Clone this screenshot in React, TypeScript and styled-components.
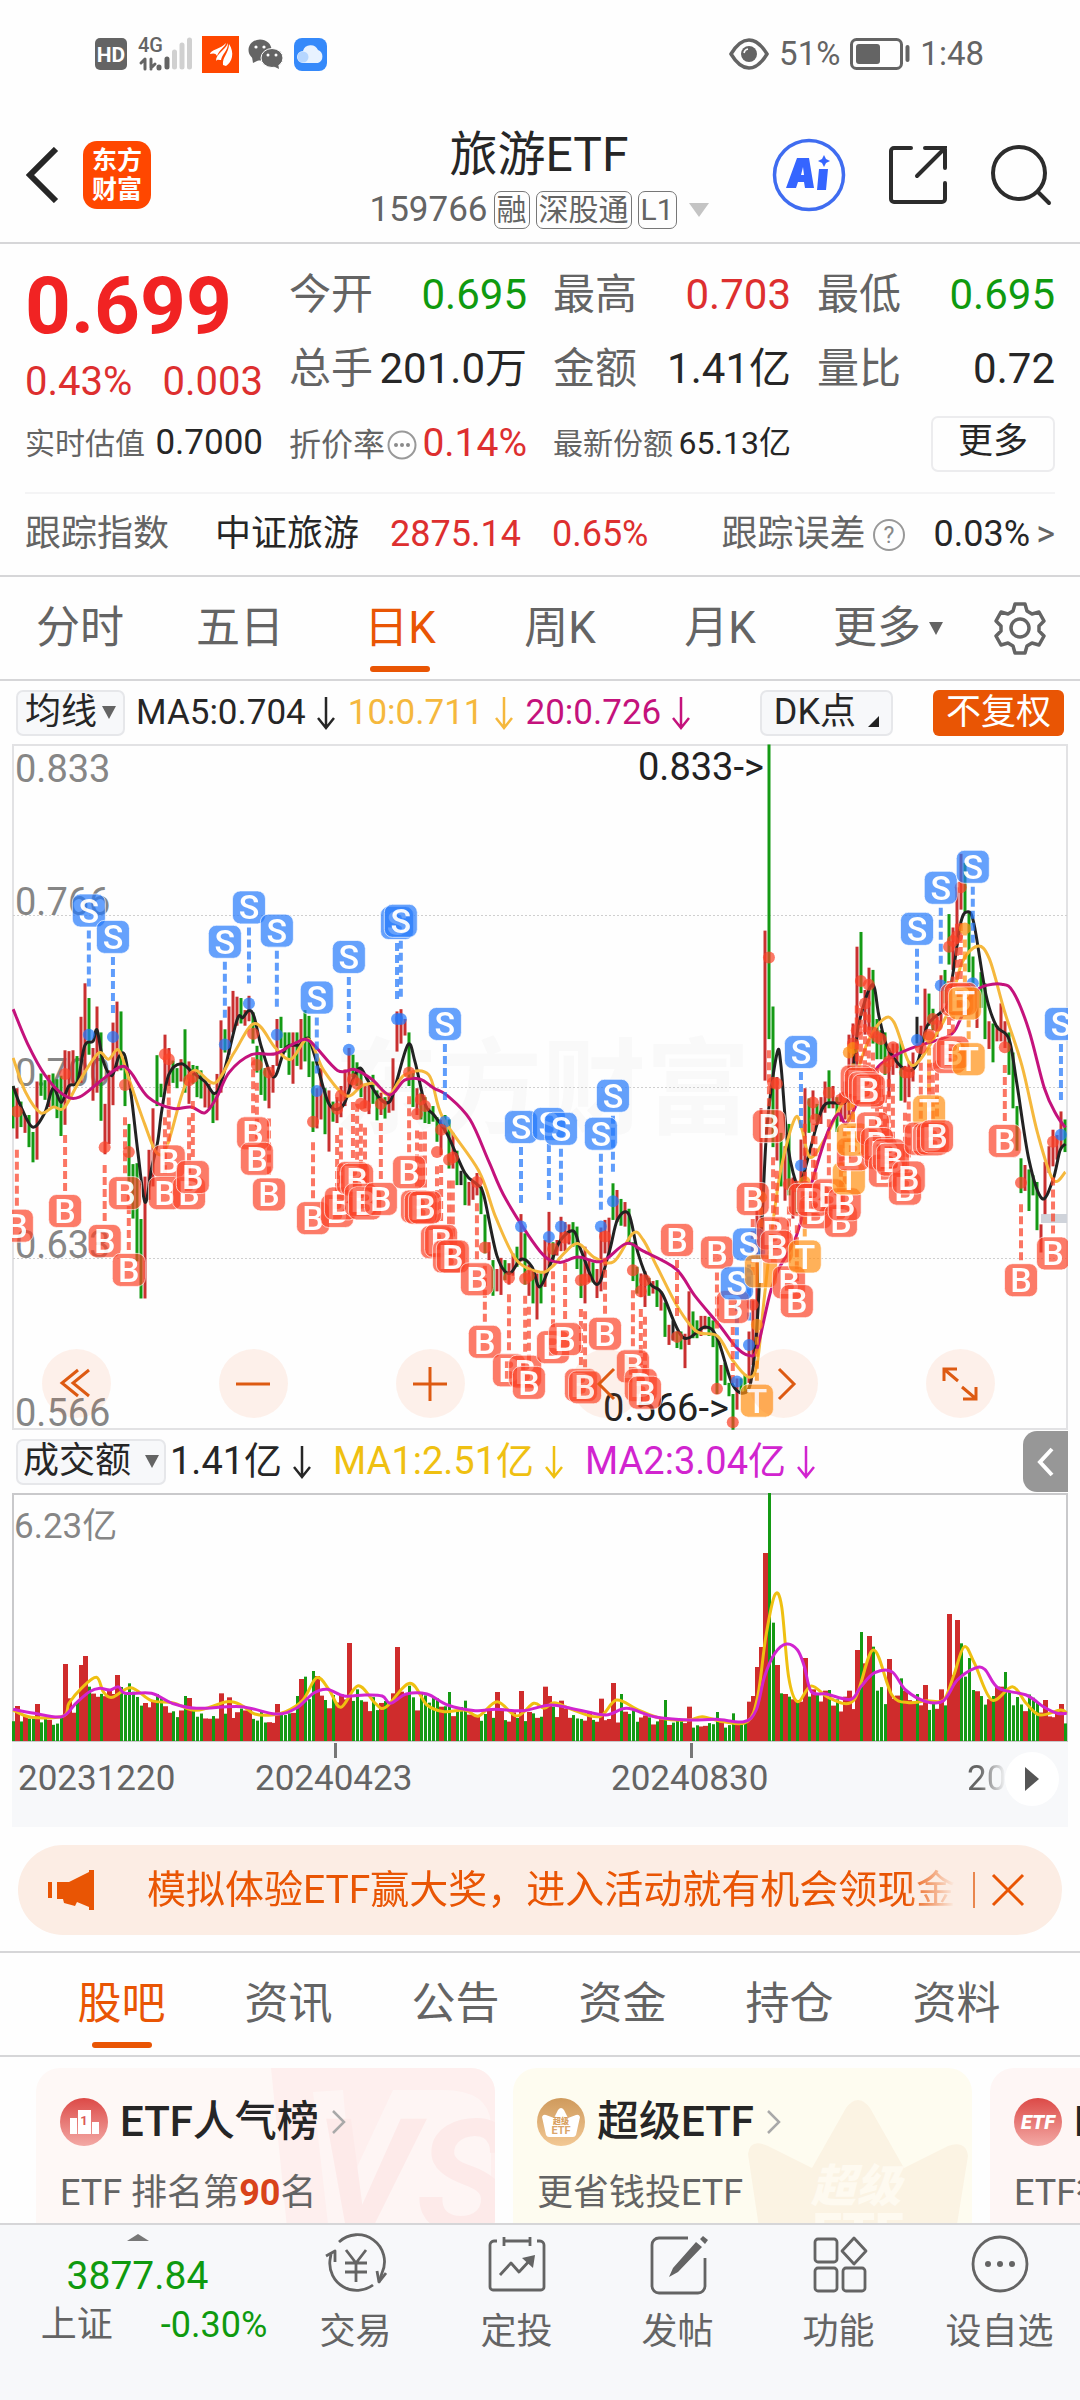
import React from "react";
import styled, { createGlobalStyle } from "styled-components";

const C = {
  orange: "#e95504",
  red: "#dd2f2f",
  green: "#0f9a0f",
  text: "#262626",
  sub: "#646464",
  line: "#d6d6d8",
  soft: "#f7f8fa",
};

const Global = createGlobalStyle`
  * { box-sizing: border-box; }
  body {
    margin: 0;
    background: #fefefe;
    color: ${C.text};
    font-family: Roboto, "Noto Sans CJK SC", sans-serif;
    line-height: 1.2;
  }
  button {
    font: inherit;
    color: inherit;
    padding: 0;
    border: 0;
    background: none;
    cursor: pointer;
  }
  svg { display: block; flex: none; }
  a { color: inherit; text-decoration: none; }
`;

const Page = styled.div`
  display: flex;
  flex-direction: column;
  overflow: hidden;
`;

/* ---------- status bar ---------- */
const StatusBar = styled.div`
  display: flex;
  justify-content: space-between;
  align-items: center;
  height: 108px;
  padding: 0 96px 0 95px;
  color: #646464;
  font-size: 33px;
`;
const StatusGroup = styled.div`
  display: flex;
  align-items: center;
  gap: 10px;
`;

/* ---------- title bar ---------- */
const TitleBar = styled.header`
  display: grid;
  grid-template-columns: 1fr auto 1fr;
  align-items: center;
  height: 136px;
  padding: 0 28px 0 26px;
  border-bottom: 2px solid ${C.line};
`;
const TitleSide = styled.div<{ $end?: boolean; $gap: number }>`
  display: flex;
  align-items: center;
  gap: ${(p) => p.$gap}px;
  justify-content: ${(p) => (p.$end ? "flex-end" : "flex-start")};
`;
const AppLogo = styled.a`
  display: grid;
  place-content: center;
  width: 68px;
  height: 68px;
  border-radius: 14px;
  background: #ff4700;
  color: #fff;
  font-size: 25px;
  font-weight: 700;
  line-height: 29px;
  text-align: center;
`;
const TitleBlock = styled.div`
  display: flex;
  flex-direction: column;
  align-items: center;
  gap: 8px;
  padding-top: 6px;
`;
const Title = styled.h1`
  margin: 0;
  font-size: 48px;
  font-weight: 400;
  line-height: 56px;
`;
const CodeRow = styled.div`
  display: flex;
  align-items: center;
  gap: 6px;
  color: ${C.sub};
  font-size: 35px;
  line-height: 38px;
`;
const Tag = styled.span`
  padding: 0 2px;
  border: 1px solid #777;
  border-radius: 7px;
  font-size: 30px;
  line-height: 36px;
`;
const CodeMenu = styled.button`
  margin-left: 6px;
`;

/* ---------- quote ---------- */
const Quote = styled.section`
  padding: 14px 25px 0;
`;
const QuoteGrid = styled.div`
  display: grid;
  grid-template-columns: repeat(4, 1fr);
  grid-template-rows: 74px 74px 76px;
  column-gap: 26px;
  padding-bottom: 10px;
  border-bottom: 2px solid #f4f4f5;
`;
const PriceBlock = styled.div`
  grid-row: span 2;
  color: ${C.red};
`;
const Price = styled.div`
  font-size: 80px;
  font-weight: 700;
  line-height: 96px;
  color: #f12323;
`;
const Change = styled.div`
  display: flex;
  justify-content: space-between;
  font-size: 40px;
  line-height: 56px;
`;
const Cell = styled.div<{ $size?: number }>`
  display: flex;
  align-items: baseline;
  justify-content: space-between;
  white-space: nowrap;
  font-size: ${(p) => p.$size ?? 42}px;
  line-height: 74px;
`;
const Label = styled.span`
  display: flex;
  align-items: center;
  gap: 2px;
  color: ${C.sub};
`;
const Value = styled.span<{ $tone?: string; $size?: number }>`
  color: ${(p) => p.$tone ?? C.text};
  font-size: ${(p) => (p.$size ? `${p.$size}px` : "inherit")};
`;
const MoreButton = styled.button`
  align-self: center;
  justify-self: end;
  width: 124px;
  height: 56px;
  padding-bottom: 4px;
  border: 2px solid #ececee;
  border-radius: 7px;
  font-size: 35px;
`;
const IndexRow = styled.div`
  display: flex;
  align-items: center;
  height: 81px;
  font-size: 36px;
  white-space: nowrap;
`;
const IndexQuote = styled.a`
  display: flex;
  gap: 31px;
  margin-left: 46px;
`;
const IndexError = styled.a`
  display: flex;
  align-items: center;
  gap: 6px;
  margin-left: auto;
`;
const ErrorValue = styled.span`
  margin-left: 22px;
`;

/* ---------- tabs ---------- */
const PeriodTabs = styled.nav`
  display: grid;
  grid-template-columns: repeat(6, 160fr) 120fr;
  height: 106px;
  border-top: 2px solid ${C.line};
  border-bottom: 2px solid ${C.line};
`;
const SectionTabs = styled.nav`
  display: grid;
  grid-template-columns: repeat(6, 1fr);
  height: 106px;
  margin-top: 16px;
  padding: 0 40px 0 38px;
  border-top: 2px solid ${C.line};
  border-bottom: 2px solid ${C.line};
`;
const Tab = styled.button<{ $on?: boolean; $menu?: boolean }>`
  position: relative;
  display: flex;
  align-items: center;
  justify-content: center;
  gap: 8px;
  padding-left: ${(p) => (p.$menu ? 16 : 0)}px;
  font-size: 44px;
  color: ${(p) => (p.$on ? C.orange : C.sub)};
  &::after {
    content: "";
    display: ${(p) => (p.$on ? "block" : "none")};
    position: absolute;
    left: calc(50% - 30px);
    bottom: 7px;
    width: 60px;
    height: 6px;
    border-radius: 3px;
    background: ${C.orange};
  }
`;

/* ---------- charts ---------- */
const ChartArea = styled.section`
  padding: 0 12px;
`;
const Legend = styled.div<{ $size: number }>`
  position: relative;
  display: flex;
  align-items: center;
  height: 63px;
  padding-left: 4px;
  font-size: ${(p) => p.$size}px;
  white-space: nowrap;
`;
const Chip = styled.button<{ $gap: number; $pad: number }>`
  display: flex;
  align-items: center;
  gap: ${(p) => p.$gap}px;
  height: 46px;
  padding: 0 ${(p) => p.$pad}px;
  border: 2px solid #e6e7ea;
  border-radius: 7px;
  background: ${C.soft};
  font-size: 36px;
`;
const LegendItem = styled.span<{ $tone: string; $left: number }>`
  display: flex;
  align-items: center;
  gap: 10px;
  margin-left: ${(p) => p.$left}px;
  color: ${(p) => p.$tone};
`;
const LegendEnd = styled.div`
  display: flex;
  align-items: center;
  gap: 40px;
  margin: 0 4px 0 auto;
`;
const AdjustButton = styled.button`
  height: 46px;
  padding: 0 13px;
  border-radius: 6px;
  background: ${C.orange};
  color: #fff;
  font-size: 35px;
`;
const FoldButton = styled.button`
  display: grid;
  place-content: center;
  width: 45px;
  height: 61px;
  margin-left: auto;
  border-radius: 14px 0 0 14px;
  background: #979797;
`;
const ChartBox = styled.div`
  position: relative;
`;
const ChartSvg = styled.svg`
  width: 100%;
  height: auto;
`;
const ChartTools = styled.div`
  position: absolute;
  left: 30px;
  right: 73px;
  bottom: 12px;
  display: flex;
  justify-content: space-between;
`;
const ToolButton = styled.button`
  display: grid;
  place-content: center;
  width: 69px;
  height: 69px;
  border-radius: 50%;
  background: rgba(240, 100, 30, 0.09);
`;
const DateAxis = styled.div`
  position: relative;
  display: grid;
  grid-template-columns: 243fr 356fr 356fr 101fr;
  height: 85px;
  padding-top: 18px;
  background: ${C.soft};
  color: ${C.sub};
  font-size: 35px;
  line-height: 38px;
  overflow: hidden;
`;
const DateLabel = styled.span<{ $tick?: boolean; $pad?: boolean; $fade?: boolean }>`
  position: relative;
  justify-self: start;
  padding-left: ${(p) => (p.$pad ? 6 : 0)}px;
  mask-image: ${(p) => (p.$fade ? "linear-gradient(90deg, #000 30%, transparent)" : "none")};
  &::before {
    content: "";
    display: ${(p) => (p.$tick ? "block" : "none")};
    position: absolute;
    left: 50%;
    top: -17px;
    width: 3px;
    height: 15px;
    background: #777;
  }
`;
const NextButton = styled.button`
  position: absolute;
  right: 9px;
  top: 10px;
  display: grid;
  place-content: center;
  width: 54px;
  height: 54px;
  border-radius: 50%;
  background: #fff;
`;

/* ---------- banner ---------- */
const Banner = styled.div`
  display: flex;
  align-items: center;
  height: 90px;
  margin: 18px 18px 0;
  padding: 0 37px 0 30px;
  border-radius: 45px;
  background: #fcede4;
  color: ${C.orange};
`;
const BannerText = styled.a`
  flex: 1;
  min-width: 0;
  margin: 0 18px 0 53px;
  overflow: hidden;
  white-space: nowrap;
  font-size: 39px;
  line-height: 60px;
  mask-image: linear-gradient(90deg, #000 94%, transparent);
`;
const BannerRule = styled.i`
  width: 2px;
  height: 36px;
  margin-right: 16px;
  background: #e9864e;
`;

/* ---------- cards ---------- */
const Cards = styled.section`
  display: flex;
  gap: 18px;
  height: 166px;
  padding: 11px 0 0 36px;
  overflow: hidden;
`;
const Card = styled.a<{ $bg: string }>`
  position: relative;
  flex: none;
  width: 459px;
  height: 200px;
  padding: 26px 24px;
  border-radius: 24px;
  background: ${(p) => p.$bg};
  overflow: hidden;
`;
const CardArt = styled.svg`
  position: absolute;
  right: 0;
  top: 0;
`;
const CardHead = styled.div`
  position: relative;
  display: flex;
  align-items: center;
  gap: 12px;
  height: 56px;
  font-size: 42px;
  font-weight: 500;
  white-space: nowrap;
`;
const CardText = styled.div`
  position: relative;
  margin-top: 19px;
  color: ${C.sub};
  font-size: 36px;
  line-height: 48px;
  white-space: nowrap;
  b { color: #d9431a; }
`;

/* ---------- bottom bar ---------- */
const BottomBar = styled.nav`
  display: grid;
  grid-template-columns: 275fr repeat(5, 161fr);
  height: 177px;
  border-top: 2px solid ${C.line};
  background: ${C.soft};
`;
const IndexBlock = styled.button`
  display: flex;
  flex-direction: column;
  align-items: center;
  padding-top: 9px;
  color: ${C.green};
`;
const IndexPrice = styled.span`
  margin-top: 11px;
  font-size: 39px;
  line-height: 48px;
`;
const IndexMeta = styled.span`
  display: flex;
  gap: 48px;
  margin-left: 33px;
  font-size: 36px;
  line-height: 50px;
  white-space: nowrap;
`;
const NavItem = styled.button`
  display: flex;
  flex-direction: column;
  align-items: center;
  gap: 12px;
  padding-top: 8px;
  color: ${C.sub};
  font-size: 36px;
  line-height: 50px;
  white-space: nowrap;
`;

/* ---------- small drawings ---------- */
const Caret = ({ w = 14, h = 13, color = "#646464", up = false }) => (
  <svg width={w} height={h} viewBox="0 0 10 10" preserveAspectRatio="none">
    <path d={up ? "M0 10L5 0l5 10z" : "M0 0h10L5 10z"} fill={color} />
  </svg>
);
const DownArrow = () => (
  <svg width="20" height="34" viewBox="0 0 20 34" fill="none" stroke="currentColor" strokeWidth="2.5">
    <path d="M10 1v30M2 22l8 10 8-10" />
  </svg>
);

/* ---------- price data: colour, high, low for each trading day ---------- */
const CANDLES = `g775-870 r780-893 g810-867 r840-880 g840-912 g878-946 r765-940 g747-797 g762-806 r750-822 g747-822 g760-847
g752-887 r695-862 r697-800 r695-770 g708-770 r620-768 r545-740 g578-705 r690-808 r597-790 g655-853 r815-928 r740-905 r633-818
r586-742 g608-740 g712-820 g860-990 g950-1072 g948-1168 g1073-1251 r978-1251 r918-1030 r825-1000 g706-820 g770-800 r660-785
r690-775 g718-768 g735-780 r715-765 g648-790 r720-815 g728-770 g730-800 g740-803 r765-823 r770-825 g790-858 r748-852 r628-790
g648-700 r597-705 r562-655 r575-640 g578-635 r605-640 r573-630 g610-680 g685-745 g700-795 g735-808 r740-825 r728-790 r625-730
g620-690 g655-700 g655-750 r655-770 g655-730 r625-738 g605-720 g618-755 g720-878 r780-870 r735-850 g780-883 r785-922 g810-855
r800-858 r775-845 r738-820 r690-790 g705-755 g722-775 g735-800 r770-825 r770-838 g750-815 g785-852 r790-840 g800-848 r790-835
r713-830 r608-698 r603-680 r625-662 g655-775 g745-822 r780-840 g790-850 g800-858 g825-860 g820-855 g845-900 r850-930 g840-880
g850-960 r880-960 g920-997 k965-997 g970-1042 r990-1043 r990-1030 r970-1020 g1000-1062 g1063-1150 r1125-1165 g1165-1245
r1185-1235 r1160-1243 g1165-1210 r1172-1220 r1150-1200 g1135-1180 r1062-1168 g1105-1220 r1175-1245 g1190-1262 r1195-1298
g1190-1262 r1120-1225 r1057-1180 g1125-1170 r1120-1155 r1068-1145 r1080-1145 r1085-1130 g1080-1135 g1090-1185 g1160-1250
r1135-1262 r1165-1215 g1170-1215 r1185-1250 r1092-1235 r1075-1150 r1070-1155 g993-1075 r1008-1080 g1028-1088 r1035-1090
g1050-1130 g1125-1212 g1180-1240 r1195-1248 r1190-1270 g1205-1245 r1212-1240 g1210-1270 r1235-1278 g1260-1337 r1310-1355
k1300-1345 g1325-1362 g1325-1365 r1330-1407 r1235-1355 g1280-1340 g1300-1340 r1290-1335 r1290-1320 g1292-1335 g1300-1360
g1340-1465 r1400-1435 g1395-1445 g1440-1470 g1465-1545 r1430-1500 g1430-1460 g1420-1465 r1325-1440 r1255-1400 r1055-1340
r825-1130 r427-763 g10-670 g597-912 r755-942 g880-1000 r910-1032 g860-1020 r980-1072 g1000-1060 r895-1010 r780-1000 g803-880
r785-850 g815-855 r800-860 r765-835 g740-825 r775-825 g800-878 r790-855 r765-850 r660-840 r635-760 r463-730 g430-567 r560-660
r510-650 g515-680 g625-715 g650-715 g655-750 r690-800 r680-750 r680-735 g675-808 r730-812 r720-800 r700-765 k620-680 r640-705
r557-660 g568-640 g602-650 r620-665 r527-640 g515-590 g390-503 r420-515 r330-460 r255-380 g275-385 g385-520 g485-545 r560-645
g520-600 g545-670 r630-692 g635-722 r640-675 r590-675 r630-690 g655-750 g700-825 g820-920 g937-1015 r952-1010 g962-1055
g975-1020 g990-1098 r1085-1148 r945-1062 r910-970 r873-955 r885-940 r832-915 g850-923`
  .split(/\s+/)
  .map((s) => {
    const [hi, lo] = s.slice(1).split("-").map(Number);
    return { c: s[0], hi, lo };
  });

type Pt = [number, number];
const pts = (s: string): Pt[] => s.trim().split(/\s+/).map((p) => p.split(",").map(Number) as Pt);

/* Half the price panel is 1568 units wide; its depth of 1568 units spans 700 px. */
const px = (x: number) => x / 2.904 - 12;
const py = (y: number) => y / 2.24 - 4;
const MA5 = pts(`38,775 60,820 95,867 130,835 154,780 178,812 200,775 225,765 246,685 270,675 282,650 300,720 325,752 345,710 363,708
380,790 400,920 421,1035 440,960 458,900 470,830 490,750 526,725 560,745 595,765 623,792 645,760 688,628 705,622 723,606 738,620
760,690 795,755 830,690 870,683 895,668 915,710 955,815 995,820 1025,760 1046,735 1070,765 1105,805 1132,810 1150,770 1185,682
1205,720 1234,815 1260,840 1300,885 1350,970 1385,995 1405,1020 1443,1155 1478,1195 1513,1163 1545,1180 1568,1225 1603,1165
1628,1120 1666,1100 1688,1145 1733,1220 1768,1150 1793,1075 1826,1062 1853,1150 1888,1218 1923,1240 1983,1338 2048,1315
2083,1340 2128,1445 2168,1460 2186,1410 2201,1280 2213,1080 2228,860 2256,703 2268,730 2288,910 2318,1000 2338,960 2373,860
2398,815 2453,812 2473,770 2493,640 2533,548 2553,620 2578,690 2628,738 2663,725 2693,640 2733,610 2753,590 2768,520 2790,410
2808,385 2828,410 2863,570 2893,640 2930,670 2953,770 2988,940 3026,1027 3058,985 3078,920 3094,905`);
const MA10 = pts(`38,712 75,790 118,835 155,822 185,825 230,765 285,702 315,715 345,695 375,760 420,860 455,925 485,910 530,790 565,740
625,768 680,700 740,635 800,690 845,715 895,670 940,740 1005,797 1050,775 1090,770 1130,795 1175,750 1245,750 1285,845 1390,965
1440,1070 1500,1165 1568,1192 1603,1180 1638,1150 1678,1128 1728,1160 1783,1168 1838,1105 1868,1120 1908,1180 1968,1270 2023,1325
2083,1335 2128,1390 2173,1427 2198,1400 2218,1260 2240,1110 2268,960 2308,848 2328,870 2353,935 2398,890 2438,825 2473,780
2518,680 2563,627 2596,632 2638,720 2668,720 2718,660 2758,600 2793,500 2838,462 2873,490 2918,610 2968,730 3013,880 3058,985
3094,968`);
const MA20 = pts(`38,603 80,680 130,750 185,795 230,800 290,765 350,732 380,745 430,800 500,825 555,822 595,835 630,800 665,745 730,705
800,703 860,678 900,675 980,740 1030,738 1080,760 1132,795 1175,762 1220,760 1260,780 1300,797 1365,850 1420,945 1470,1030 1568,1145
1623,1170 1678,1158 1748,1168 1818,1128 1868,1145 1963,1185 2018,1245 2088,1310 2138,1360 2173,1378 2198,1365 2233,1250 2258,1190
2308,1120 2343,1030 2398,890 2434,838 2458,858 2498,800 2550,732 2604,705 2663,686 2758,662 2788,627 2820,575 2855,552 2909,547
2943,565 2988,650 3033,780 3068,840 3094,868`);

const smooth = (list: Pt[], fx: (n: number) => number, fy: (n: number) => number) => {
  const p = list.map(([x, y]) => [fx(x), fy(y)]);
  let d = `M${p[0][0].toFixed(1)} ${p[0][1].toFixed(1)}`;
  for (let i = 0; i < p.length - 1; i++) {
    const a = p[Math.max(0, i - 1)], b = p[i], c = p[i + 1], e = p[Math.min(p.length - 1, i + 2)];
    const q = [b[0] + (c[0] - a[0]) / 6, b[1] + (c[1] - a[1]) / 6, c[0] - (e[0] - b[0]) / 6, c[1] - (e[1] - b[1]) / 6, c[0], c[1]];
    d += "C" + q.map((n) => n.toFixed(1)).join(" ");
  }
  return d;
};

/* Trade marks: kind, x, badge depth, price dot depth. */
const MARKS = `S258,382,660 S328,441,665 S653,452,682 S723,375,590 S804,427,660 S920,577,786 S1013,486,694 S1153,410,625 S1164,405,625
S1292,636,855 S1513,867,1090 S1594,860,1113 S1629,871,1090 S1745,882,1090 S1780,797,1033
B49,1088,832 B189,1055,748 B304,1122,912 B363,1015,773 B374,1187,923 B490,944,715 B479,1015,704 B549,1015,762 B560,979,755
B735,881,658 B746,938,728 B781,1018,745 B909,1071,855 B979,1055,826 B990,1038,797 B1025,981,760 B1037,985,770 B1048,1030,815
B1060,1038,820 B1106,1028,815 B1188,968,745 B1211,1045,838 B1222,1048,805 B1234,1047,820 B1269,1125,923 B1281,1122,873
B1304,1157,940 B1315,1157,935 B1385,1208,990 B1408,1348,1137 B1478,1412,1205 B1525,1415,1207 B1536,1440,1200 B1606,1360,1140
B1641,1342,1115 B1687,1445,1210 B1699,1450,1208 B1757,1330,1112 B1838,1403,1188 B1861,1445,1235 B1873,1462,1210 B1966,1120,1337
B2082,1148,1453 B2128,1270,1528 S2175,1130,1355 S2140,1217,1437 B2186,1028,1265 T2198,1480,1310 T2210,1190,1024 B2233,865,487
B2245,1105,768 B2256,1135,770 B2291,1215,995 B2314,1257,1000 T2337,1157,990 S2326,699,953 B2337,1030,1000 B2368,1058,850
B2361,1030,812 B2407,1020,790 B2442,1077,805 B2453,1040,800 T2465,982,700 B2477,928,680 T2477,895,690 B2488,765,650 B2500,770,540
B2512,780,590 B2523,785,548 B2535,870,655 B2547,905,665 B2558,925,670 B2570,965,735 B2581,930,720 B2593,940,688 B2628,1005,745
B2639,980,745 T2698,832,665 B2674,893,690 B2698,895,660 B2709,893,625 B2721,888,640 B2756,710,463 B2767,700,450 T2813,715,560
B2779,582,440 B2790,580,330 T2802,590,422 S2663,423,672 S2732,331,550 S2825,284,545 B2918,898,688 B2965,1210,992 B3058,1150,900
S3081,636,884`
  .split(/\s+/)
  .map((s) => {
    const [x, y, dot] = s.slice(1).split(",").map(Number);
    return { k: s[0], x: px(x), y: py(y), dot: py(dot) };
  });
const MARK_FILL: Record<string, string> = { S: "#2479fb", B: "#fb4329", T: "#ff9013" };
const BAR: Record<string, string> = { r: "#c93030", g: "#149a14", k: "#222" };

const PriceChart = () => (
  <ChartSvg viewBox="0 0 1056 686" role="img" aria-label="日K">
    <defs>
      <clipPath id="panel"><rect width="1056" height="686" /></clipPath>
    </defs>
    <text x="322" y="382" fontSize="104" fontWeight="700" fill="#f9f9f9">东方财富</text>
    <rect x="1" y="1" width="1054" height="684" fill="none" stroke="#e2e2e4" strokeWidth="2" />
    {[171, 343, 514].map((y) => (
      <path key={y} d={`M1 ${y}.5h1054`} stroke="#cfcfcf" strokeDasharray="2 2" />
    ))}
    <g fontSize="38" fill="#868686">
      <text x="3" y="38">0.833</text>
      <text x="3" y="171">0.766</text>
      <text x="3" y="342">0.700</text>
      <text x="3" y="514">0.633</text>
      <text x="3" y="682">0.566</text>
    </g>
    <g fontSize="38" fill="#222">
      <text x="626" y="36">0.833-&gt;</text>
      <text x="591" y="677">0.566-&gt;</text>
    </g>
    <g clipPath="url(#panel)">
      <rect x="1029" y="470" width="26" height="9" fill="#cfd3da" />
      {CANDLES.map((b, i) => (
        <rect key={i} x={i * 4 - 0.5} y={py(b.hi)} width="3" height={(b.lo - b.hi) / 2.24} fill={BAR[b.c]} />
      ))}
      <g fill="none" strokeWidth="3">
        <path d={smooth(MA5, px, py)} stroke="#222" />
        <path d={smooth(MA10, px, py)} stroke="#f5b83d" />
        <path d={smooth(MA20, px, py)} stroke="#c4127c" />
      </g>
      {MARKS.map((m, i) => {
        const dir = m.dot > m.y ? 1 : -1;
        return (
          <g key={i} fill={MARK_FILL[m.k]} stroke={MARK_FILL[m.k]} opacity="0.72">
            <circle cx={m.x} cy={m.dot} r="6" stroke="none" />
            <path d={`M${m.x} ${m.y + dir * 76}V${m.y + dir * 19}`} strokeWidth="4" strokeDasharray="8 4" />
          </g>
        );
      })}
      {MARKS.map((m, i) => (
        <g key={i} opacity="0.92">
          <rect x={m.x - 16.5} y={m.y - 16.5} width="33" height="33" rx="8" fill={MARK_FILL[m.k]} fillOpacity="0.76" stroke="#fff" strokeOpacity="0.7" />
          <text x={m.x} y={m.y + 12} fontSize="34" fontWeight="500" fill="#fff" textAnchor="middle">{m.k}</text>
        </g>
      ))}
    </g>
  </ChartSvg>
);

/* ---------- turnover ---------- */
const vx = (x: number) => x / 1.452 - 12;
const vy = (y: number) => (y - 219) / 3;
const VMA1 = pts(`19,870 45,892 92,888 100,850 118,805 140,772 150,815 163,832 190,803 220,842 250,848 280,870 300,865 330,845 350,855
370,882 395,885 415,875 440,840 460,773 478,810 495,862 520,797 545,850 560,862 595,790 620,855 645,875 675,870 695,888 722,845
750,888 775,850 790,865 805,848 830,868 870,890 895,840 925,868 960,895 1000,900 1020,890 1050,905 1085,905 1100,830 1112,650
1125,525 1135,560 1145,770 1158,845 1178,798 1205,835 1240,840 1268,690 1295,825 1320,848 1345,842 1370,840 1385,765 1400,680
1415,730 1440,840 1470,800 1490,850 1510,885 1540,870 1549,880`);
const VMA2 = pts(`19,868 50,880 90,890 110,850 130,815 145,805 160,810 172,800 182,820 220,820 250,850 285,865 350,860 400,882 430,865
455,820 475,808 500,828 530,825 555,828 567,850 590,822 620,822 650,855 690,872 720,868 760,872 800,855 840,870 880,885 910,865
950,890 1000,900 1040,898 1080,905 1098,870 1110,770 1125,700 1142,672 1158,690 1168,740 1178,815 1200,822 1235,838 1250,800
1270,758 1295,755 1315,810 1345,845 1370,842 1390,780 1415,745 1430,748 1450,805 1490,825 1515,860 1535,880 1549,880`);
const PEAKS: Record<number, number> = {
  1: 858, 6: 852, 13: 732, 14: 835, 17: 735, 18: 708, 19: 800, 26: 765, 29: 790, 36: 822, 43: 828, 44: 834, 52: 820, 54: 832, 66: 852,
  71: 828, 72: 777, 73: 770, 75: 753, 76: 768, 78: 840, 84: 669, 86: 808, 95: 820, 96: 681, 97: 815, 99: 797, 106: 835, 109: 816,
  113: 842, 121: 816, 127: 813, 133: 800, 134: 828, 137: 842, 147: 836, 150: 789, 152: 822, 163: 840, 169: 860, 176: 876, 180: 880,
  184: 845, 185: 828, 186: 741, 187: 681, 188: 399, 189: 219, 190: 608, 191: 735, 192: 820, 193: 822, 194: 830, 195: 838, 196: 840,
  197: 845, 198: 714, 200: 808, 203: 812, 204: 810, 209: 812, 211: 690, 212: 636, 213: 730, 214: 648, 215: 680, 216: 812, 219: 717,
  222: 775, 223: 812, 226: 822, 228: 795, 232: 808, 234: 582, 235: 765, 236: 600, 237: 670, 238: 770, 239: 714, 240: 810, 245: 828,
  246: 800, 247: 800, 248: 756, 249: 812, 258: 840, 262: 852,
};
/* Days whose turnover bar is coloured against the previous close, not the open. */
const RISING = new Set([127, 133, 150, 219, 228, 234]);
const FALLING = new Set([75, 109, 190, 215, 237, 248]);
const levelAt = (x: number) => {
  const k = Math.max(1, VMA2.findIndex((p) => p[0] >= x));
  const [a, b] = [VMA2[k - 1], VMA2[k]];
  return a[1] + ((b[1] - a[1]) * (x - a[0])) / (b[0] - a[0]);
};
const VOLUMES = CANDLES.map((b, i) => {
  const wave = Math.abs(Math.sin(i * 12.9898) * 43758.5453) % 1;
  const level = Math.max(800, levelAt(19 + i * 5.8));
  return {
    up: RISING.has(i) || (b.c === "r" && !FALLING.has(i)),
    top: PEAKS[i] ?? 962 - (962 - level) * (0.62 + wave * 0.42),
  };
});

const VolumeChart = () => (
  <ChartSvg viewBox="0 0 1056 249" role="img" aria-label="成交额">
    <rect x="1" y="1" width="1054" height="247" fill="none" stroke="#c9c9cb" strokeWidth="2" />
    <text x="2" y="45" fontSize="35" fill="#868686">6.23亿</text>
    {VOLUMES.map((v, i) => (
      <rect key={i} x={i * 4 - (v.up ? 1 : 0)} y={vy(v.top)} width={v.up ? 5 : 3} height={248 - vy(v.top)} fill={v.up ? "#cf2c2c" : BAR.g} />
    ))}
    <g fill="none" strokeWidth="3">
      <path d={smooth(VMA1, vx, vy)} stroke="#efc011" />
      <path d={smooth(VMA2, vx, vy)} stroke="#d124cf" />
    </g>
  </ChartSvg>
);

const TOOLS: [string, string][] = [
  ["快退", "M22 3L6 16l16 13M33 3L17 16l16 13"],
  ["缩小", "M4 17h34"],
  ["放大", "M4 17h34M21 0v34"],
  ["向左", "M28 2L13 17l15 15"],
  ["向右", "M16 2l15 15-15 15"],
  ["全屏", "M5 14V2h13M6 3l13 11M37 20v12H24M36 31L23 20"],
];

const NAV: [string, React.ReactNode][] = [
  ["交易", <>
    <path d="M14 9A27 27 0 0 1 57 40l-3 9M48 52A27 27 0 0 1 5 27l1-6" />
    <path d="M1 23l9-5v11M61 40l-7 9-2-11" />
    <path d="M21 17l10 13 10-13M20 30h22M20 39h22M31 30v19" />
  </>],
  ["定投", <>
    <path d="M11 8H8a4 4 0 0 0-4 4v42a3 3 0 0 0 3 3h48a3 3 0 0 0 3-3V12a4 4 0 0 0-4-4h-3M18 4v9M44 4v9M18 8h26" />
    <path d="M14 42l11-12 8 9 13-14" />
    <path d="M36 25l13-3-2 13z" fill="currentColor" stroke="none" />
  </>],
  ["发帖", <>
    <path d="M41 5H12a7 7 0 0 0-7 7v41a7 7 0 0 0 7 7h39a7 7 0 0 0 7-7V25" />
    <path d="M49 9l6 5-24 25-9 5 4-9zM53 6l3-3 5 4-3 4z" fill="currentColor" stroke="none" />
  </>],
  ["功能", <>
    <rect x="7" y="6" width="22" height="23" rx="3" />
    <path d="M46 5l12 13-12 13-12-13z" />
    <rect x="7" y="35" width="22" height="23" rx="3" />
    <rect x="35" y="35" width="22" height="23" rx="3" />
  </>],
  ["设自选", <>
    <circle cx="31" cy="31" r="27" />
    <g fill="currentColor" stroke="none"><circle cx="19" cy="31" r="3" /><circle cx="31" cy="31" r="3" /><circle cx="43" cy="31" r="3" /></g>
  </>],
];

const Chevron = () => (
  <svg width="16" height="26" viewBox="0 0 16 26" fill="none" stroke="#a9a9a9" strokeWidth="2.5"><path d="M2 2l11 11L2 24" /></svg>
);

export default function App() {
  return (
    <Page>
      <Global />
      <StatusBar>
        <StatusGroup>
          <svg width="232" height="38" viewBox="0 0 232 38">
            <rect x="0" y="3" width="32" height="32" rx="5" fill="#646464" />
            <text x="16" y="27" fontSize="21" fontWeight="700" fill="#fff" textAnchor="middle">HD</text>
            <text x="43" y="17" fontSize="20" fontWeight="500" fill="#646464">4G</text>
            <g stroke="#646464" strokeLinecap="round">
              <path d="M64 32v1M72 24v8" strokeWidth="5" />
              <path d="M50 24v10M56 24v10M50 24l-4 4M56 33l4-4" strokeWidth="3" />
            </g>
            <path d="M79.500 17v15M87 10v22M94.500 5v27" stroke="#d0d0d0" strokeWidth="5" strokeLinecap="round" />
            <rect x="107" y="1" width="37" height="37" fill="#ff4700" />
            <path d="M115 19c0-4 11-5 16-11-1 4-7 7-9 13-1-3-4-3-7-2zM121 26c0-8 9-10 12-18 0 8-6 11-7 17-1 0-4-1-5 1zM128 30c-1-8 6-12 6-21 6 9 3 18-3 22z" fill="#fff" />
            <g fill="#646464">
              <ellipse cx="165" cy="15" rx="11.500" ry="10.500" />
              <path d="M157 22l1 6 6-3z" />
              <ellipse cx="177" cy="23" rx="11" ry="9.500" stroke="#fff" />
              <path d="M178 31l6 3-1-6z" />
            </g>
            <g fill="#fff"><circle cx="161" cy="12" r="1.600" /><circle cx="169" cy="12" r="1.600" /><circle cx="173" cy="20" r="1.500" /><circle cx="181" cy="20" r="1.500" /></g>
            <rect x="199" y="3" width="33" height="33" rx="8" fill="#3589fa" />
            <path d="M208 28a6 6 0 0 1 0-12 8 8 0 0 1 15-1 7 7 0 0 1 0 13z" fill="#e8f2ff" />
            <circle cx="208" cy="22" r="5.500" fill="#b6d6ff" />
          </svg>
        </StatusGroup>
        <StatusGroup>
          <svg width="40" height="32" viewBox="0 0 40 32">
            <path d="M2 16c6-10 12-14 18-14s12 4 18 14c-6 10-12 14-18 14S8 26 2 16z" fill="none" stroke="#646464" strokeWidth="3.500" />
            <circle cx="20" cy="16" r="8" fill="#646464" />
            <path d="M15 15a5 5 0 0 1 4-4" stroke="#fff" strokeWidth="1.500" fill="none" />
          </svg>
          <span>51%</span>
          <svg width="60" height="32" viewBox="0 0 60 32">
            <rect x="1.500" y="1.500" width="50" height="29" rx="5" fill="none" stroke="#646464" strokeWidth="3" />
            <rect x="6" y="6" width="24" height="20" rx="3" fill="#646464" />
            <path d="M57.500 9v13" stroke="#646464" strokeWidth="4" strokeLinecap="round" />
          </svg>
          <span>1:48</span>
        </StatusGroup>
      </StatusBar>

      <TitleBar>
        <TitleSide $gap={24}>
          <button aria-label="返回">
            <svg width="33" height="56" viewBox="0 0 33 56" fill="none" stroke="#262626" strokeWidth="6"><path d="M30 2L4 28l26 26" /></svg>
          </button>
          <AppLogo href="#home">东方<br />财富</AppLogo>
        </TitleSide>
        <TitleBlock>
          <Title>旅游ETF</Title>
          <CodeRow>
            159766<Tag>融</Tag><Tag>深股通</Tag><Tag>L1</Tag>
            <CodeMenu aria-label="切换"><Caret w={20} h={14} color="#c4c4c4" /></CodeMenu>
          </CodeRow>
        </TitleBlock>
        <TitleSide $end $gap={42}>
          <button aria-label="AI">
            <svg width="74" height="74" viewBox="0 0 74 74">
              <circle cx="37" cy="37" r="34.500" fill="none" stroke="#3f6cf0" strokeWidth="3.500" />
              <path d="M14 50L25 20h12l5 30h-9l-1-6h-6l-2 6zM29 37h3l-1-8zM47 31h9l-2 21h-9z" fill="#3565ff" fillRule="evenodd" />
              <path d="M52 17l2 4 4 2-4 2-2 4-2-4-4-2 4-2z" fill="#3565ff" />
            </svg>
          </button>
          <button aria-label="分享">
            <svg width="60" height="60" viewBox="0 0 60 60" fill="none" stroke="#2c2c2c" strokeWidth="4" strokeLinecap="round">
              <path d="M23 3H6a3 3 0 0 0-3 3v48a3 3 0 0 0 3 3h48a3 3 0 0 0 3-3V38M37 3h20v20M57 3L29 31" />
            </svg>
          </button>
          <button aria-label="搜索">
            <svg width="62" height="62" viewBox="0 0 62 62" fill="none" stroke="#2c2c2c" strokeWidth="4" strokeLinecap="round">
              <circle cx="29" cy="29" r="26" /><path d="M48 48l11 11" />
            </svg>
          </button>
        </TitleSide>
      </TitleBar>

      <Quote>
        <QuoteGrid>
          <PriceBlock>
            <Price>0.699</Price>
            <Change><span>0.43%</span><span>0.003</span></Change>
          </PriceBlock>
          <Cell><Label>今开</Label><Value $tone={C.green}>0.695</Value></Cell>
          <Cell><Label>最高</Label><Value $tone={C.red}>0.703</Value></Cell>
          <Cell><Label>最低</Label><Value $tone={C.green}>0.695</Value></Cell>
          <Cell><Label>总手</Label><Value>201.0万</Value></Cell>
          <Cell><Label>金额</Label><Value>1.41亿</Value></Cell>
          <Cell><Label>量比</Label><Value>0.72</Value></Cell>
          <Cell $size={30}><Label>实时估值</Label><Value $size={35}>0.7000</Value></Cell>
          <Cell $size={32}>
            <Label>
              折价率
              <svg width="30" height="30" viewBox="0 0 30 30" fill="#8a8a8a">
                <circle cx="15" cy="15" r="13.500" fill="none" stroke="#999" strokeWidth="2" />
                <circle cx="9" cy="15" r="2" /><circle cx="15" cy="15" r="2" /><circle cx="21" cy="15" r="2" />
              </svg>
            </Label>
            <Value $tone={C.red} $size={39}>0.14%</Value>
          </Cell>
          <Cell $size={30}><Label>最新份额</Label><Value $size={32}>65.13亿</Value></Cell>
          <MoreButton>更多</MoreButton>
        </QuoteGrid>
        <IndexRow>
          <Label>跟踪指数</Label>
          <IndexQuote href="#index">
            <span>中证旅游</span>
            <Value $tone={C.red}>2875.14</Value>
            <Value $tone={C.red}>0.65%</Value>
          </IndexQuote>
          <IndexError href="#error">
            <Label>跟踪误差</Label>
            <svg width="34" height="34" viewBox="0 0 34 34" fill="none">
              <circle cx="17" cy="17" r="15" stroke="#999" strokeWidth="2" />
              <text x="17" y="25" fontSize="23" fill="#888" textAnchor="middle">?</text>
            </svg>
            <ErrorValue>0.03%</ErrorValue>
            <Label>&gt;</Label>
          </IndexError>
        </IndexRow>
      </Quote>

      <PeriodTabs>
        <Tab>分时</Tab>
        <Tab>五日</Tab>
        <Tab $on>日K</Tab>
        <Tab>周K</Tab>
        <Tab>月K</Tab>
        <Tab $menu>更多<Caret /></Tab>
        <Tab aria-label="设置">
          <svg width="54" height="54" viewBox="0 0 54 54" fill="none" stroke="#646464" strokeWidth="3.500" strokeLinejoin="round">
            <path d="M22 3h10l2 7 5 3 7-2 5 9-5 5v5l5 5-5 9-7-2-5 3-2 7H22l-2-7-5-3-7 2-5-9 5-5v-5l-5-5 5-9 7 2 5-3z" />
            <circle cx="27" cy="27" r="9" />
          </svg>
        </Tab>
      </PeriodTabs>

      <ChartArea>
        <Legend $size={35}>
          <Chip $gap={5} $pad={7}>均线<Caret /></Chip>
          <LegendItem $tone="#262626" $left={11}>MA5:0.704<DownArrow /></LegendItem>
          <LegendItem $tone="#f5b83d" $left={12}>10:0.711<DownArrow /></LegendItem>
          <LegendItem $tone="#c4127c" $left={12}>20:0.726<DownArrow /></LegendItem>
          <LegendEnd>
            <Chip $gap={11} $pad={12}>
              DK点
              <svg width="12" height="28" viewBox="0 0 12 28"><path d="M12 17v11H1z" fill="#222" /></svg>
            </Chip>
            <AdjustButton>不复权</AdjustButton>
          </LegendEnd>
        </Legend>
        <ChartBox>
          <PriceChart />
          <ChartTools>
            {TOOLS.map(([name, d]) => (
              <ToolButton key={name} aria-label={name}>
                <svg width="42" height="34" viewBox="0 0 42 34" fill="none" stroke="#dd5a12" strokeWidth="3"><path d={d} /></svg>
              </ToolButton>
            ))}
          </ChartTools>
        </ChartBox>
        <Legend $size={38}>
          <Chip $gap={14} $pad={5}>成交额<Caret /></Chip>
          <LegendItem $tone="#262626" $left={4}>1.41亿<DownArrow /></LegendItem>
          <LegendItem $tone="#efc011" $left={21}>MA1:2.51亿<DownArrow /></LegendItem>
          <LegendItem $tone="#d124cf" $left={21}>MA2:3.04亿<DownArrow /></LegendItem>
          <FoldButton aria-label="展开">
            <svg width="18" height="30" viewBox="0 0 18 30" fill="none" stroke="#fff" strokeWidth="4"><path d="M15 2L3 15l12 13" /></svg>
          </FoldButton>
        </Legend>
        <VolumeChart />
        <DateAxis>
          <DateLabel $pad>20231220</DateLabel>
          <DateLabel $tick>20240423</DateLabel>
          <DateLabel $tick>20240830</DateLabel>
          <DateLabel $fade>20</DateLabel>
          <NextButton aria-label="下一页">
            <svg width="14" height="24" viewBox="0 0 14 24"><path d="M0 0l14 12L0 24z" fill="#555" /></svg>
          </NextButton>
        </DateAxis>
      </ChartArea>

      <Banner>
        <svg width="46" height="40" viewBox="0 0 46 40" fill={C.orange}>
          <path d="M0 12h4v16H0zM9 12h12L41 2V0h5v40h-5v-3l-12-5-2 4-11-3-1-4H9z" />
        </svg>
        <BannerText href="#activity">模拟体验ETF赢大奖，进入活动就有机会领现金</BannerText>
        <BannerRule />
        <button aria-label="关闭">
          <svg width="34" height="34" viewBox="0 0 34 34" fill="none" stroke={C.orange} strokeWidth="3"><path d="M2 2l30 30M32 2L2 32" /></svg>
        </button>
      </Banner>

      <SectionTabs>
        {["股吧", "资讯", "公告", "资金", "持仓", "资料"].map((t, i) => (
          <Tab key={t} $on={i === 0}>{t}</Tab>
        ))}
      </SectionTabs>

      <Cards>
        <Card href="#rank" $bg="#fef8f6">
          <CardArt width="224" height="200" viewBox="0 0 224 200">
            <path d="M0 0h224v200H20z" fill="#feefee" />
            <path d="M42 24l30-2 8 90 42-90h50q46 0 48 34v144H62z" fill="#fef5f4" />
            <text x="44" y="164" fontSize="160" fontWeight="700" fontStyle="italic" fill="#fdeae9">VS</text>
          </CardArt>
          <CardHead>
            <svg width="48" height="48" viewBox="0 0 48 48">
              <defs><linearGradient id="red" x2="0" y2="1"><stop stopColor="#dc4a47" /><stop offset="1" stopColor="#f3a9a5" /></linearGradient></defs>
              <circle cx="24" cy="24" r="24" fill="url(#red)" />
              <path d="M10 20h7v16h-7zM18 12h13v24H18zM32 24h7v12h-7z" fill="#fff" />
              <text x="24" y="27" fontSize="13" fontWeight="700" fill="#dc5a57" textAnchor="middle">1</text>
            </svg>
            ETF人气榜 <Chevron />
          </CardHead>
          <CardText>ETF 排名第<b>90</b>名</CardText>
        </Card>
        <Card href="#super" $bg="#fefcf0">
          <CardArt width="224" height="200" viewBox="0 0 224 200">
            <path d="M17 200L0 86q2-16 20-8l44 22L98 40q12-16 24 0l34 60 44-22q18-6 20 10l-18 112z" fill="#fbf3e3" />
            <text x="108" y="134" fontSize="45" fontWeight="900" fontStyle="italic" fill="#fefaf0" textAnchor="middle">超级</text>
            <text x="110" y="182" fontSize="52" fontWeight="900" fill="#fefaf0" textAnchor="middle">ETF</text>
          </CardArt>
          <CardHead>
            <svg width="48" height="48" viewBox="0 0 48 48">
              <defs><linearGradient id="gold" x2="0" y2="1"><stop stopColor="#cf9a5c" /><stop offset="1" stopColor="#f2c894" /></linearGradient></defs>
              <circle cx="24" cy="24" r="24" fill="url(#gold)" />
              <path d="M9 37L5 19q1-3 4-2l8 3 4-8q3-4 6 0l4 8 8-3q3-1 4 2l-4 18q-1 2-3 2H12q-2 0-3-2z" fill="#fff" />
              <text x="24" y="26" fontSize="8" fontWeight="900" fill="#d8a060" textAnchor="middle">超级</text>
              <text x="24" y="36" fontSize="11" fontWeight="700" fill="#dba66a" textAnchor="middle">ETF</text>
            </svg>
            超级ETF <Chevron />
          </CardHead>
          <CardText>更省钱投ETF</CardText>
        </Card>
        <Card href="#market" $bg="#fef6f5">
          <CardHead>
            <svg width="48" height="48" viewBox="0 0 48 48">
              <circle cx="24" cy="24" r="24" fill="url(#red)" />
              <text x="24" y="31" fontSize="20" fontWeight="900" fontStyle="italic" fill="#fff" textAnchor="middle">ETF</text>
            </svg>
            ETF
          </CardHead>
          <CardText>ETF行</CardText>
        </Card>
      </Cards>

      <BottomBar>
        <IndexBlock>
          <Caret w={22} h={7} color="#777" up />
          <IndexPrice>3877.84</IndexPrice>
          <IndexMeta><Label>上证</Label>-0.30%</IndexMeta>
        </IndexBlock>
        {NAV.map(([name, art]) => (
          <NavItem key={name}>
            <svg width="62" height="62" viewBox="0 0 62 62" fill="none" stroke="currentColor" strokeWidth="2.800" strokeLinejoin="round">{art}</svg>
            {name}
          </NavItem>
        ))}
      </BottomBar>
    </Page>
  );
}
